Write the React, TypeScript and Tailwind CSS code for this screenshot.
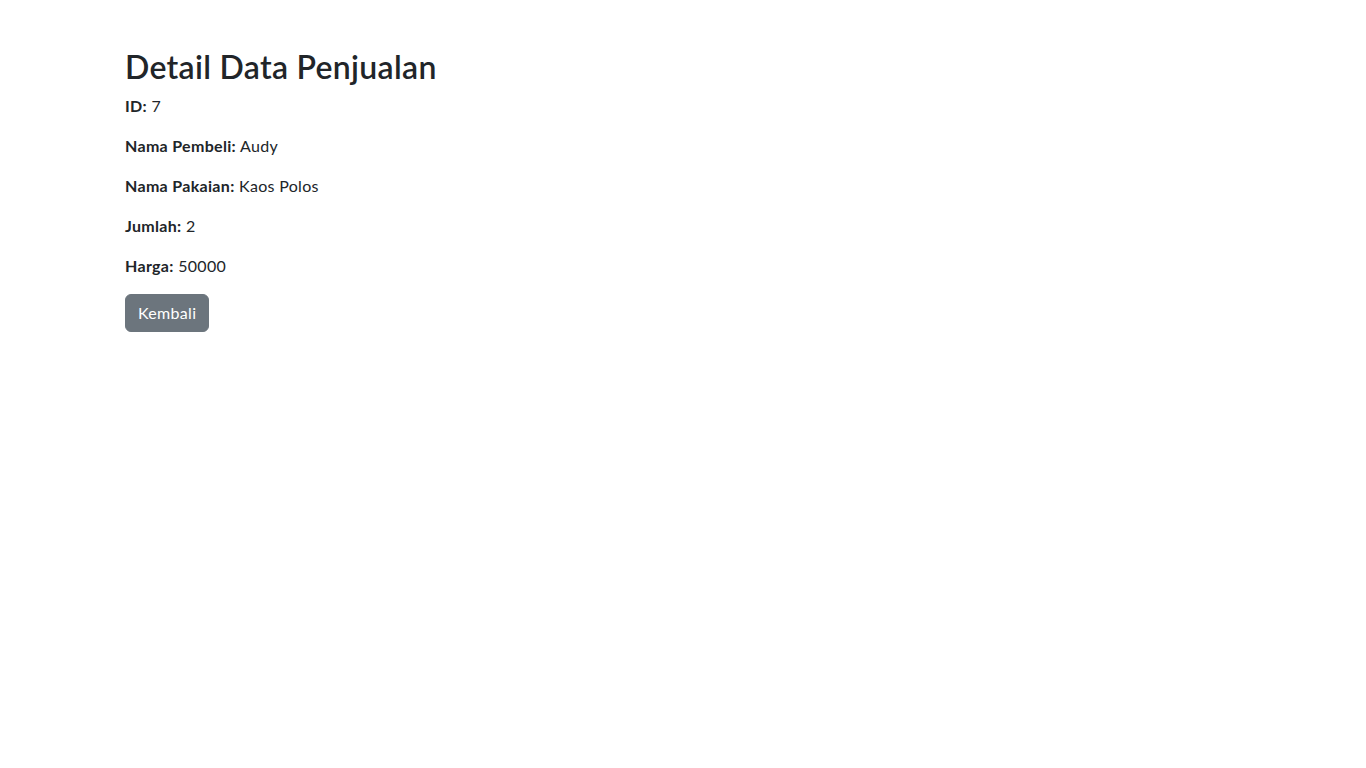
import React from 'react';

const detail = [
  { label: 'ID:', value: '7' },
  { label: 'Nama Pembeli:', value: 'Audy' },
  { label: 'Nama Pakaian:', value: 'Kaos Polos' },
  { label: 'Jumlah:', value: '2' },
  { label: 'Harga:', value: '50000' },
];

const App = () => {
  return (
    <div className="min-h-screen bg-white text-[#212529] font-['Segoe_UI','Lato',sans-serif] text-base leading-normal tracking-[0.02em]">
      <div className="mx-auto w-[1140px] px-3 pt-12">
        <h2 className="mb-2 text-[32px] font-semibold leading-[1.2] tracking-[0.3px]">Detail Data Penjualan</h2>
        {detail.map((item) => (
          <p key={item.label} className="mb-4">
            <strong className="font-bold">{item.label}</strong> {item.value}
          </p>
        ))}
        <button className="rounded-md border border-[#6c757d] bg-[#6c757d] px-3 py-1.5 text-white">Kembali</button>
      </div>
    </div>
  );
};

export default App;
